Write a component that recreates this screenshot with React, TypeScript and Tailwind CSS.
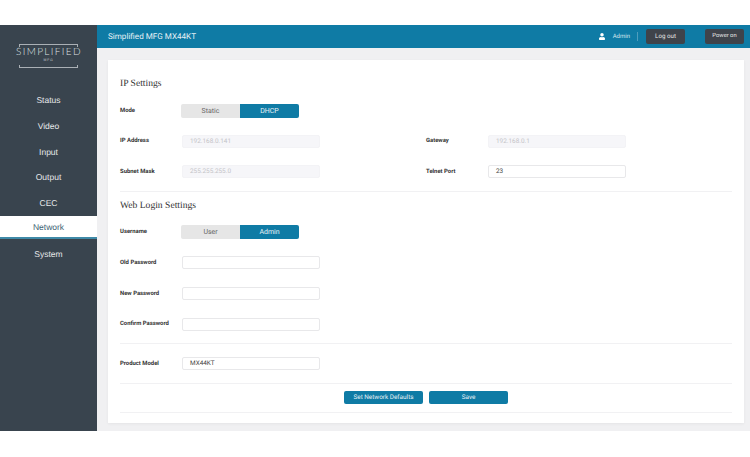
import { FaUser } from "react-icons/fa";

const nav = ["Status", "Video", "Input", "Output", "CEC", "Network", "System"];

function Toggle({ a, b }: { a: string; b: string }) {
  return (
    <div className="flex -ml-px w-[118px] h-[14px] text-[7px] leading-[14px] text-center">
      <div className="w-[59px] bg-[#e6e6e6] text-[#666] rounded-l-[2px]">{a}</div>
      <div className="w-[59px] bg-[#0f7ba5] text-[#e8f2f6] rounded-r-[2px]">{b}</div>
    </div>
  );
}

function Field({ value = "", disabled = false }: { value?: string; disabled?: boolean }) {
  return (
    <div
      className={`w-[138px] h-[13px] rounded-[2px] border px-[7px] text-[6.4px] leading-[11px] ${
        disabled ? "bg-[#f6f6f9] border-[#f3f3f6] text-[#c4c4c8]" : "bg-white border-[#e8e8ea] text-[#444]"
      }`}
    >
      {value}
    </div>
  );
}

function Label({ children }: { children: string }) {
  return <div className="w-[62px] text-[5.9px] leading-[8px] font-bold text-[#333] shrink-0">{children}</div>;
}

function Row({ label, h, children }: { label: string; h: string; children: React.ReactNode }) {
  return (
    <div className={`flex items-center ${h}`}>
      <Label>{label}</Label>
      {children}
    </div>
  );
}

function Pair({ l, lv, r, rv, rDisabled, h }: { l: string; lv: string; r: string; rv: string; rDisabled: boolean; h: string }) {
  return (
    <div className={`flex items-center ${h}`}>
      <Label>{l}</Label>
      <Field value={lv} disabled />
      <div className="ml-[106px]">
        <Label>{r}</Label>
      </div>
      <Field value={rv} disabled={rDisabled} />
    </div>
  );
}

function Heading({ children }: { children: string }) {
  return <div className="font-['Liberation_Serif',serif] text-[9.6px] text-[#333] h-[28px] flex items-center">{children}</div>;
}

function Btn({ children }: { children: string }) {
  return (
    <div className="w-[79px] h-[13px] rounded-[2px] bg-[#0f7ba5] text-[#e8f2f6] text-[6.4px] leading-[13px] text-center">
      {children}
    </div>
  );
}

export default function App() {
  return (
    <div className="w-[750px] h-[457px] bg-white overflow-hidden pt-[25px] font-['Roboto',Arial,sans-serif] [text-rendering:geometricPrecision]">
      <div className="flex h-[406px]">
        <aside className="w-[97px] shrink-0 bg-[#39444e] flex flex-col font-['Liberation_Sans',Arial,sans-serif]">
          <div className="mt-[19px] mx-[17px] h-[26px] flex flex-col items-center">
            <div className="w-[59px] h-[3px] border-t border-x border-[#aab0b5]" />
            <div className="font-['Lato',sans-serif] font-light text-[10px] leading-[11px] tracking-[0.14em] text-[#dfe2e4] whitespace-nowrap pl-[1px]">SIMPLIFIED</div>
            <div className="text-[3.5px] leading-[5px] tracking-[0.2em] text-[#c5c9cc]">MFG</div>
            <div className="w-[59px] h-[3px] mt-[2px] border-b border-x border-[#aab0b5]" />
          </div>
          <nav className="mt-[18px] flex flex-col">
            {nav.map((n) =>
              n === "Network" ? (
                <div key={n} className="h-[25.6px] pt-[0.5px]">
                  <div className="h-[23px] pt-[1px] bg-white border-b-2 border-[#3f8aa8] text-[#3d6273] text-[8.5px] flex items-center justify-center">
                    {n}
                  </div>
                </div>
              ) : (
                <div key={n} className="h-[25.6px] text-[#e6e8ea] text-[8.5px] flex items-center justify-center">
                  {n}
                </div>
              )
            )}
          </nav>
        </aside>
        <div className="flex-1 bg-[#f0f0f2] flex flex-col">
          <header className="h-[23px] bg-[#0f7ba5] flex items-center pl-[11px] pr-[6px] text-white">
            <div className="text-[8.1px] text-[#e6f1f5]">Simplified MFG MX44KT</div>
            <FaUser className="ml-auto w-[6px] h-[7px] text-white" />
            <div className="ml-[8px] text-[6px] text-[#d5e7ee]">Admin</div>
            <div className="ml-[7px] w-px h-[9px] bg-[#4f9dbd]" />
            <div className="ml-[8px] w-[39px] h-[15px] rounded-[2px] bg-[#3f434a] text-[#e5e5e5] text-[6.2px] leading-[15px] text-center">Log out</div>
            <div className="ml-[20px] w-[39px] h-[15px] rounded-[2px] bg-[#3f434a] text-[#e5e5e5] text-[5.8px] leading-[15px] text-center">Power on</div>
          </header>
          <main className="mt-[12px] ml-[11px] mr-[6px] h-[363px] bg-white shadow-[0_1px_3px_rgba(0,0,0,0.05)] px-[12px] pt-[10px]">
            <Heading>IP Settings</Heading>
            <Row label="Mode" h="h-[25px]">
              <Toggle a="Static" b="DHCP" />
            </Row>
            <div className="mt-[7px]">
              <Pair l="IP Address" lv="192.168.0.141" r="Gateway" rv="192.168.0.1" rDisabled h="h-[22px]" />
            </div>
            <div className="mt-[9px]">
              <Pair l="Subnet Mask" lv="255.255.255.0" r="Telnet Port" rv="23" rDisabled={false} h="h-[21px]" />
            </div>
            <div className="mt-[9px] border-t border-[#f1f1f3]" />
            <Heading>Web Login Settings</Heading>
            <Row label="Username" h="h-[24px]">
              <Toggle a="User" b="Admin" />
            </Row>
            <div className="mt-[3px]">
              <Row label="Old Password" h="h-[31px]">
                <Field />
              </Row>
            </div>
            <Row label="New Password" h="h-[31px]">
              <Field />
            </Row>
            <Row label="Confirm Password" h="h-[30px]">
              <Field />
            </Row>
            <div className="mt-[4px] border-t border-[#f1f1f3]" />
            <Row label="Product Model" h="h-[39px]">
              <Field value="MX44KT" />
            </Row>
            <div className="border-t border-[#f1f1f3]" />
            <div className="h-[28px] pt-[7px] flex items-start justify-center gap-[6px]">
              <Btn>Set Network Defaults</Btn>
              <Btn>Save</Btn>
            </div>
            <div className="border-t border-[#f1f1f3]" />
          </main>
        </div>
      </div>
    </div>
  );
}
